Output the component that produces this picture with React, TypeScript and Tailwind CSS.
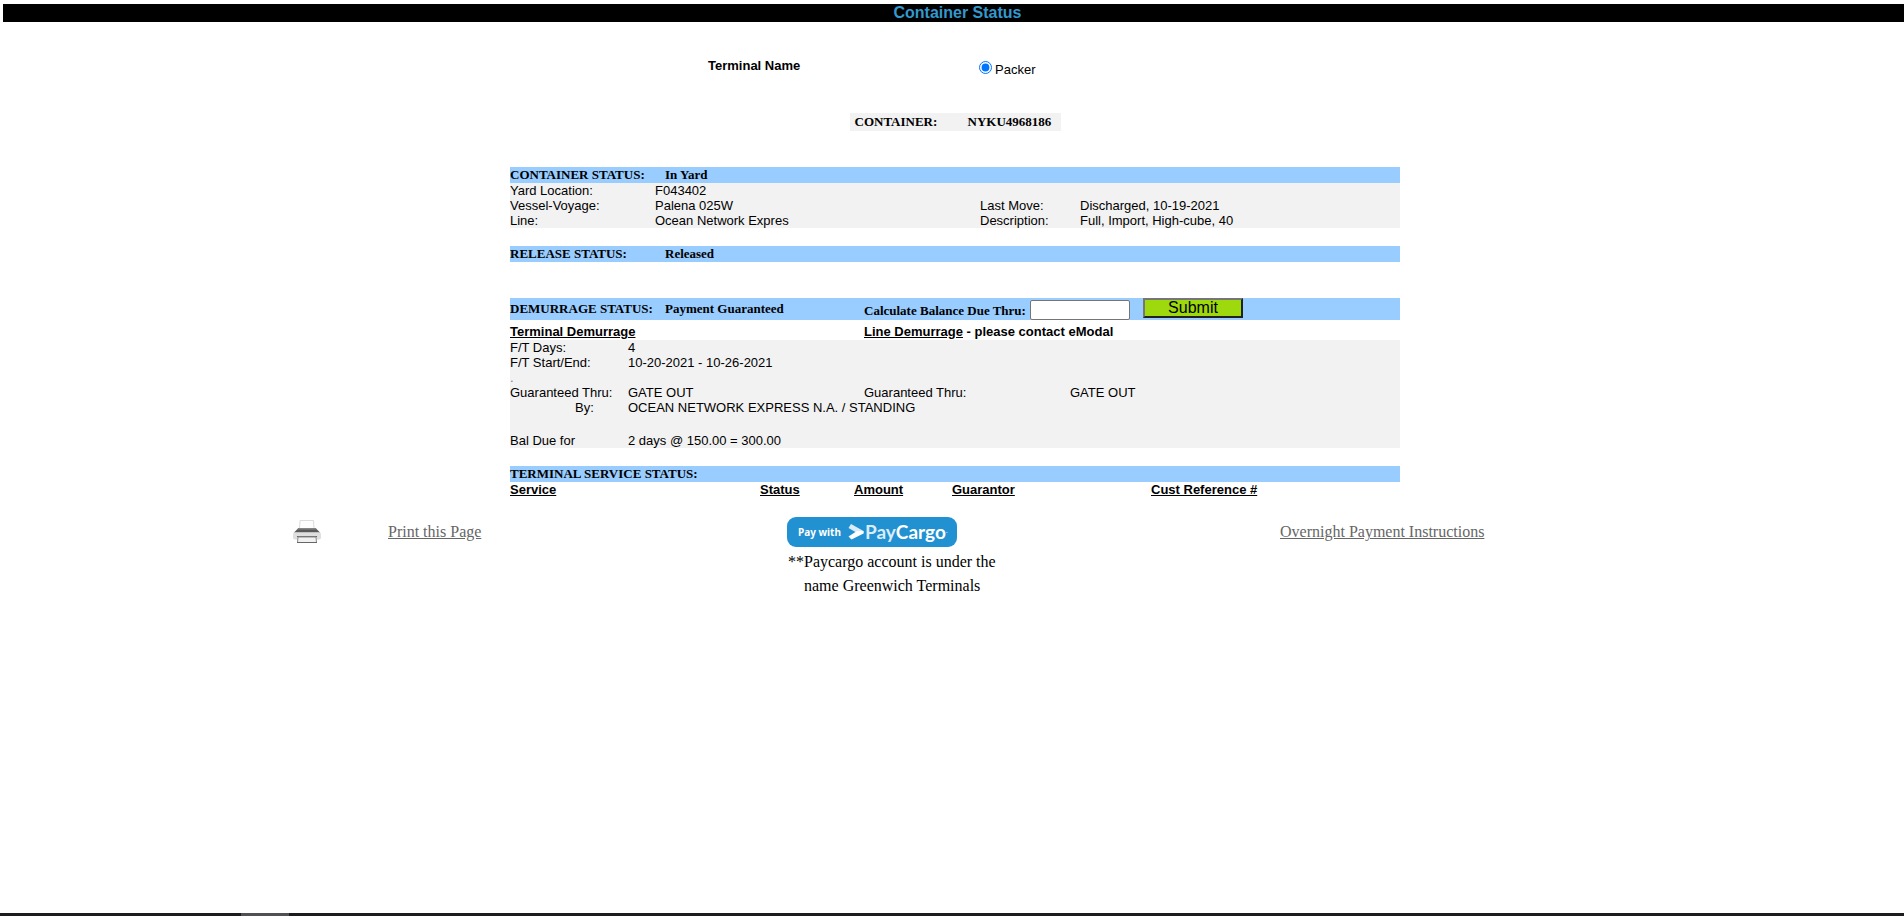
import React from 'react';

const serviceColumns = [
  { label: 'Service', width: 'w-[250px]' },
  { label: 'Status', width: 'w-[94px]' },
  { label: 'Amount', width: 'w-[98px]' },
  { label: 'Guarantor', width: 'w-[199px]' },
  { label: 'Cust Reference #', width: 'w-auto' },
];

function StatusBar({ title, value }: { title: string; value?: string }) {
  return (
    <div className="flex h-4 bg-[#99ccff] font-['Liberation_Serif',serif] font-bold leading-4">
      <h2 className="w-[155px] whitespace-nowrap">{title}</h2>
      {value && <p>{value}</p>}
    </div>
  );
}

function PrinterIcon() {
  return (
    <svg width="30" height="26" viewBox="0 0 30 26" aria-hidden="true">
      <path d="M8 1.500h13.500l0.500 8H7.500z" fill="#fdfdfd" stroke="#dcdcdc" />
      <path d="M6.500 9h17l4.500 4.500H2z" fill="#5a5a5a" />
      <path d="M6.500 9h17l1.500 1.500H5z" fill="#858585" />
      <path d="M2 13h26l1 2v4.500l-1.500 1h-25L1 19.500V15z" fill="#dfdfdf" />
      <path d="M2 13.500h26" stroke="#c2c2c2" />
      <path d="M5 17.500h20" stroke="#666" />
      <path d="M6 18h18l0.500 5.500h-19z" fill="#f0f0f0" stroke="#8a8a8a" />
      <path d="M5 23.500h20" stroke="#666" />
    </svg>
  );
}

function PayCargoButton() {
  return (
    <a
      href="#paycargo"
      className="flex h-[30px] w-[170px] items-center rounded-[9px] bg-[#2191d2] pl-[11px] text-white"
    >
      <span className="w-[50px] whitespace-nowrap font-['Noto_Sans',sans-serif] text-[10px] font-bold">Pay with</span>
      <svg width="17" height="18" viewBox="0 0 17 18" aria-hidden="true">
        <path d="M3 1L15.500 8v2.500H10L0.500 5z" fill="#d9ecf8" />
        <path d="M15.500 8v2.500L3.500 16.500L0.500 13.500L9 8z" fill="#fff" />
      </svg>
      <span className="font-['Lato',sans-serif] text-[19px] font-bold">
        <span className="text-[#d9ecf8]">Pay</span>Cargo
      </span>
      <span className="self-end pb-1 text-[8px]">.</span>
    </a>
  );
}

export default function App() {
  return (
    <div className="flex min-h-screen flex-col bg-white pt-1 font-['Liberation_Sans',Arial,sans-serif] text-[13px] leading-[15px] text-black">
      <header className="ml-[3px] bg-black pl-2">
        <h1 className="text-center text-base font-bold leading-[18px] text-[#3399cc]">Container Status</h1>
      </header>

      <main className="flex flex-col items-center pl-1.5">
        {/* Terminal picker */}
        <div role="radiogroup" aria-labelledby="terminal-name" className="mt-[34px] flex w-[494px]">
          <span id="terminal-name" className="w-[271px] pt-0.5 font-bold">Terminal Name</span>
          <label className="flex items-center gap-[3px] pt-1">
            <input type="radio" name="terminal" defaultChecked className="mb-0.5 size-[13px]" />
            <span className="pt-0.5">Packer</span>
          </label>
        </div>

        <div className="mt-9 flex h-[18px] w-[211px] bg-[#f2f2f2] pl-[5px] font-['Liberation_Serif',serif] font-bold leading-[18px]">
          <span className="w-[113px]">CONTAINER:</span>
          <span>NYKU4968186</span>
        </div>

        <div className="mt-9 w-full max-w-[890px]">
          {/* Container */}
          <StatusBar title="CONTAINER STATUS:" value="In Yard" />
          <table className="w-full table-fixed bg-[#f2f2f2] text-left">
            <colgroup>
              <col className="w-[145px]" />
              <col className="w-[325px]" />
              <col className="w-[100px]" />
              <col />
            </colgroup>
            <tbody>
              <tr>
                <th className="font-normal">Yard Location:</th>
                <td>F043402</td>
                <td />
                <td />
              </tr>
              <tr>
                <th className="font-normal">Vessel-Voyage:</th>
                <td>Palena 025W</td>
                <th className="font-normal">Last Move:</th>
                <td>Discharged, 10-19-2021</td>
              </tr>
              <tr>
                <th className="font-normal">Line:</th>
                <td>Ocean Network Expres</td>
                <th className="font-normal">Description:</th>
                <td>Full, Import, High-cube, 40</td>
              </tr>
            </tbody>
          </table>

          {/* Release */}
          <div className="mt-[18px]">
            <StatusBar title="RELEASE STATUS:" value="Released" />
          </div>

          {/* Demurrage */}
          <form
            className="mt-9 flex h-[22px] items-start bg-[#99ccff] font-['Liberation_Serif',serif] font-bold"
            onSubmit={(e) => e.preventDefault()}
          >
            <h2 className="w-[155px] whitespace-nowrap pt-[3px]">DEMURRAGE STATUS:</h2>
            <p className="w-[199px] pt-[3px]">Payment Guaranteed</p>
            <label htmlFor="due-thru" className="w-[166px] whitespace-nowrap pt-[5px]">
              Calculate Balance Due Thru:
            </label>
            <input
              id="due-thru"
              type="text"
              className="mt-0.5 h-5 w-[100px] rounded-xs border border-[#767676] bg-white px-1 font-normal"
            />
            <button
              type="submit"
              className="ml-[13px] h-5 w-[100px] border-2 border-t-[#767676] border-l-[#767676] border-r-[#212121] border-b-[#212121] bg-[#9ed90d] font-['Liberation_Sans',sans-serif] text-base font-normal leading-4"
            >
              Submit
            </button>
          </form>
          <div className="flex h-5 pt-1 font-bold">
            <h3 className="w-[354px] underline">Terminal Demurrage</h3>
            <h3>
              <span className="underline">Line Demurrage</span> - please contact eModal
            </h3>
          </div>
          <table className="w-full table-fixed bg-[#f2f2f2] text-left">
            <colgroup>
              <col className="w-[118px]" />
              <col className="w-[236px]" />
              <col className="w-[206px]" />
              <col />
            </colgroup>
            <tbody>
              <tr>
                <th className="font-normal">F/T Days:</th>
                <td colSpan={3}>4</td>
              </tr>
              <tr>
                <th className="font-normal">F/T Start/End:</th>
                <td colSpan={3}>10-20-2021 - 10-26-2021</td>
              </tr>
              <tr>
                <td colSpan={4} className="text-[#808080]">.</td>
              </tr>
              <tr>
                <th className="font-normal">Guaranteed Thru:</th>
                <td>GATE OUT</td>
                <th className="font-normal">Guaranteed Thru:</th>
                <td>GATE OUT</td>
              </tr>
              <tr>
                <th className="pl-[65px] font-normal">By:</th>
                <td colSpan={3}>OCEAN NETWORK EXPRESS N.A. / STANDING</td>
              </tr>
              <tr>
                <th className="pt-[18px] font-normal">Bal Due for</th>
                <td colSpan={3} className="pt-[18px]">2 days @ 150.00 = 300.00</td>
              </tr>
            </tbody>
          </table>

          {/* Terminal services */}
          <div className="mt-[18px]">
            <StatusBar title="TERMINAL SERVICE STATUS:" />
          </div>
          <table className="w-full table-fixed text-left">
            <thead>
              <tr>
                {serviceColumns.map((col) => (
                  <th key={col.label} className={col.width}>
                    <span className="underline">{col.label}</span>
                  </th>
                ))}
              </tr>
            </thead>
          </table>
        </div>

        {/* Links */}
        <div className="mt-5 grid w-full max-w-[1326px] grid-cols-[96px_399fr_493fr_338fr] font-['Liberation_Serif',serif] text-base leading-6">
          <div className="pt-0.5">
            <PrinterIcon />
          </div>
          <div className="pt-[3px]">
            <a href="#print" className="text-[#666666] underline">Print this Page</a>
          </div>
          <div>
            <PayCargoButton />
            <p className="pl-px pt-[3px]">
              **Paycargo account is under the
              <br />
              <span className="pl-4">name Greenwich Terminals</span>
            </p>
          </div>
          <div className="pt-[3px]">
            <a href="#overnight" className="text-[#666666] underline">Overnight Payment Instructions</a>
          </div>
        </div>
      </main>

      <div className="mt-auto h-[3px] bg-[#1c1c1f] pl-[241px]">
        <div className="h-full w-12 bg-[#505052]" />
      </div>
    </div>
  );
}
